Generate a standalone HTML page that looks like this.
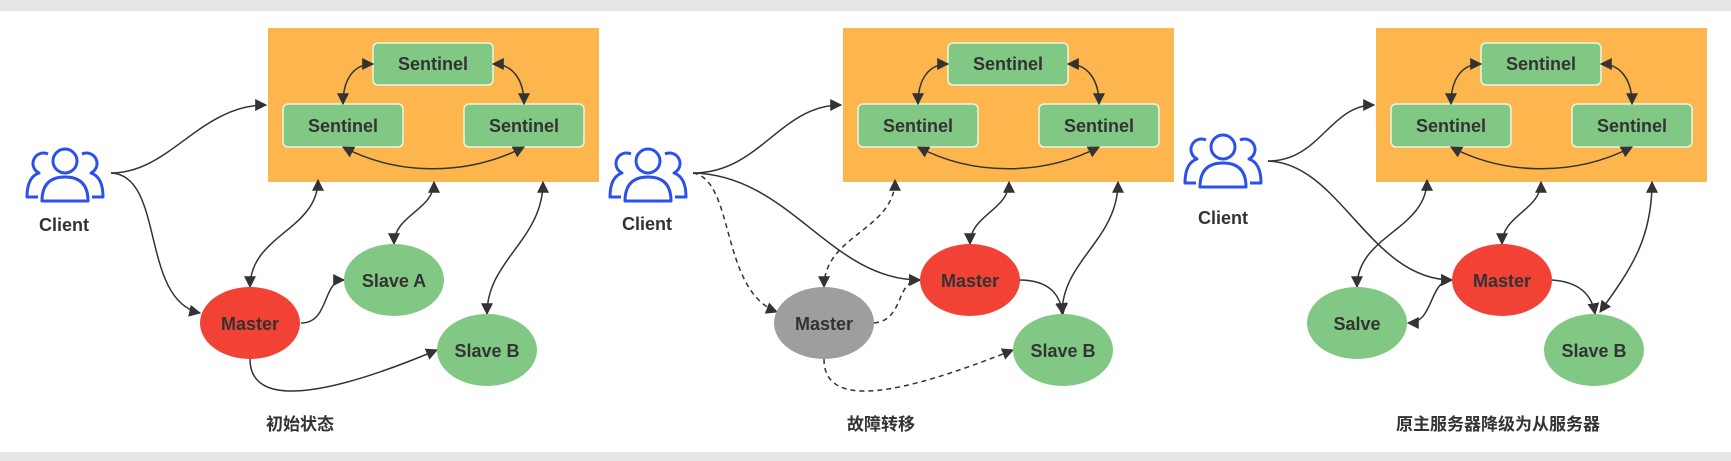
<!DOCTYPE html>
<html><head><meta charset="utf-8"><style>
html,body{margin:0;padding:0;background:#fff;width:1731px;height:461px;overflow:hidden}
svg{display:block}
text{font-family:"Liberation Sans","Noto Sans CJK SC",sans-serif;font-weight:bold;fill:#333}
</style></head><body>
<svg width="1731" height="461" viewBox="0 0 1731 461" xmlns="http://www.w3.org/2000/svg">
<defs>
<marker id="a" viewBox="0 0 10 10" refX="9" refY="5" markerWidth="12" markerHeight="12" markerUnits="userSpaceOnUse" orient="auto-start-reverse"><path d="M0,0 L10,5 L0,10 Z" fill="#333"/></marker>
<g id="user" fill="none" stroke="#2b50ec" stroke-width="3" stroke-linejoin="round">
<circle cx="40" cy="14" r="12"/>
<path d="M17,54 Q17,30 40,30 Q63,30 63,54 Z"/>
<path d="M23,7 A10,10 0 0 0 14,26 Q2,30 2,50 L13,50"/>
<path d="M57,7 A10,10 0 0 1 66,26 Q78,30 78,50 L67,50"/>
</g>
<g id="sents">
<rect x="0" y="0" width="331" height="154" fill="#fdb64e"/>
<rect x="105" y="15" width="120" height="42" rx="5" fill="#80c883" stroke="#eaf6e3" stroke-width="1.5"/>
<rect x="15" y="76" width="120" height="43" rx="5" fill="#80c883" stroke="#eaf6e3" stroke-width="1.5"/>
<rect x="196" y="76" width="120" height="43" rx="5" fill="#80c883" stroke="#eaf6e3" stroke-width="1.5"/>
<text x="165" y="42" font-size="18" text-anchor="middle">Sentinel</text>
<text x="75" y="104" font-size="18" text-anchor="middle">Sentinel</text>
<text x="256" y="104" font-size="18" text-anchor="middle">Sentinel</text>
<g fill="none" stroke="#333" stroke-width="1.5" marker-start="url(#a)" marker-end="url(#a)">
<path d="M105,36 C85,36 75,52 75,76"/>
<path d="M225,36 C245,36 256,52 256,76"/>
<path d="M75,119 C130,148 200,148 256,119"/>
</g>
</g>
</defs>
<rect x="0" y="0" width="1731" height="11" fill="#e5e5e5"/>
<rect x="0" y="452" width="1731" height="9" fill="#e5e5e5"/>

<!-- Panel 1 -->
<use href="#sents" x="268" y="28"/>
<use href="#user" x="25" y="147"/>
<text x="64" y="231" font-size="18" text-anchor="middle">Client</text>
<g fill="none" stroke="#333" stroke-width="1.5">
<path d="M111,173 C170,173 200,105 266,105" marker-end="url(#a)"/>
<path d="M111,173 C165,175 140,300 200,313" marker-end="url(#a)"/>
<path d="M250,287 C250,235 318,230 318,180" marker-start="url(#a)" marker-end="url(#a)"/>
<path d="M394,244 C394,215 434,210 434,182" marker-start="url(#a)" marker-end="url(#a)"/>
<path d="M487,314 C487,260 543,240 543,182" marker-start="url(#a)" marker-end="url(#a)"/>
<path d="M301,323 C330,323 322,280 344,280" marker-end="url(#a)"/>
<path d="M250,359 C250,410 330,395 437,350" marker-end="url(#a)"/>
</g>
<ellipse cx="250" cy="323" rx="50" ry="36" fill="#f24236"/>
<ellipse cx="394" cy="280" rx="50" ry="36" fill="#80c883"/>
<ellipse cx="487" cy="350" rx="50" ry="36" fill="#80c883"/>
<text x="250" y="330" font-size="18" text-anchor="middle">Master</text>
<text x="394" y="287" font-size="18" text-anchor="middle">Slave A</text>
<text x="487" y="357" font-size="18" text-anchor="middle">Slave B</text>
<text x="300" y="430" font-size="17" text-anchor="middle">初始状态</text>

<!-- Panel 2 -->
<use href="#sents" x="843" y="28"/>
<use href="#user" x="608" y="147"/>
<text x="647" y="230" font-size="18" text-anchor="middle">Client</text>
<g fill="none" stroke="#333" stroke-width="1.5">
<path d="M693,173 C760,173 780,105 841,105" marker-end="url(#a)"/>
<path d="M693,173 C790,175 830,280 920,280" marker-end="url(#a)"/>
<path d="M970,244 C970,215 1009,210 1009,182" marker-start="url(#a)" marker-end="url(#a)"/>
<path d="M1062,314 C1062,260 1118,240 1118,182" marker-start="url(#a)" marker-end="url(#a)"/>
<path d="M1019,280 C1050,280 1060,295 1063,314" marker-end="url(#a)"/>
</g>
<g fill="none" stroke="#333" stroke-width="1.5" stroke-dasharray="5,4">
<path d="M693,173 C735,180 720,290 777,312" marker-end="url(#a)"/>
<path d="M824,287 C824,235 895,230 895,180" marker-start="url(#a)" marker-end="url(#a)"/>
<path d="M874,323 C905,320 895,280 920,280" marker-end="url(#a)"/>
<path d="M824,359 C824,410 900,395 1013,350" marker-end="url(#a)"/>
</g>
<ellipse cx="970" cy="280" rx="50" ry="36" fill="#f24236"/>
<ellipse cx="824" cy="323" rx="50" ry="36" fill="#9e9e9e"/>
<ellipse cx="1063" cy="350" rx="50" ry="36" fill="#80c883"/>
<text x="970" y="287" font-size="18" text-anchor="middle">Master</text>
<text x="824" y="330" font-size="18" text-anchor="middle">Master</text>
<text x="1063" y="357" font-size="18" text-anchor="middle">Slave B</text>
<text x="881" y="430" font-size="17" text-anchor="middle">故障转移</text>

<!-- Panel 3 -->
<use href="#sents" x="1376" y="28"/>
<use href="#user" x="1183" y="133"/>
<text x="1223" y="224" font-size="18" text-anchor="middle">Client</text>
<g fill="none" stroke="#333" stroke-width="1.5">
<path d="M1268,161 C1320,161 1330,105 1374,105" marker-end="url(#a)"/>
<path d="M1268,161 C1340,163 1370,280 1452,280" marker-end="url(#a)"/>
<path d="M1357,287 C1357,235 1427,230 1427,180" marker-start="url(#a)" marker-end="url(#a)"/>
<path d="M1408,323 C1435,323 1428,280 1452,280" marker-start="url(#a)" marker-end="url(#a)"/>
<path d="M1502,244 C1502,215 1541,210 1541,182" marker-start="url(#a)" marker-end="url(#a)"/>
<path d="M1600,312 C1630,270 1652,240 1652,182" marker-start="url(#a)" marker-end="url(#a)"/>
<path d="M1552,280 C1580,282 1592,295 1595,314" marker-end="url(#a)"/>
</g>
<ellipse cx="1502" cy="280" rx="50" ry="36" fill="#f24236"/>
<ellipse cx="1357" cy="323" rx="50" ry="36" fill="#80c883"/>
<ellipse cx="1594" cy="350" rx="50" ry="36" fill="#80c883"/>
<text x="1502" y="287" font-size="18" text-anchor="middle">Master</text>
<text x="1357" y="330" font-size="18" text-anchor="middle">Salve</text>
<text x="1594" y="357" font-size="18" text-anchor="middle">Slave B</text>
<text x="1498" y="430" font-size="17" text-anchor="middle">原主服务器降级为从服务器</text>
</svg>
</body></html>
